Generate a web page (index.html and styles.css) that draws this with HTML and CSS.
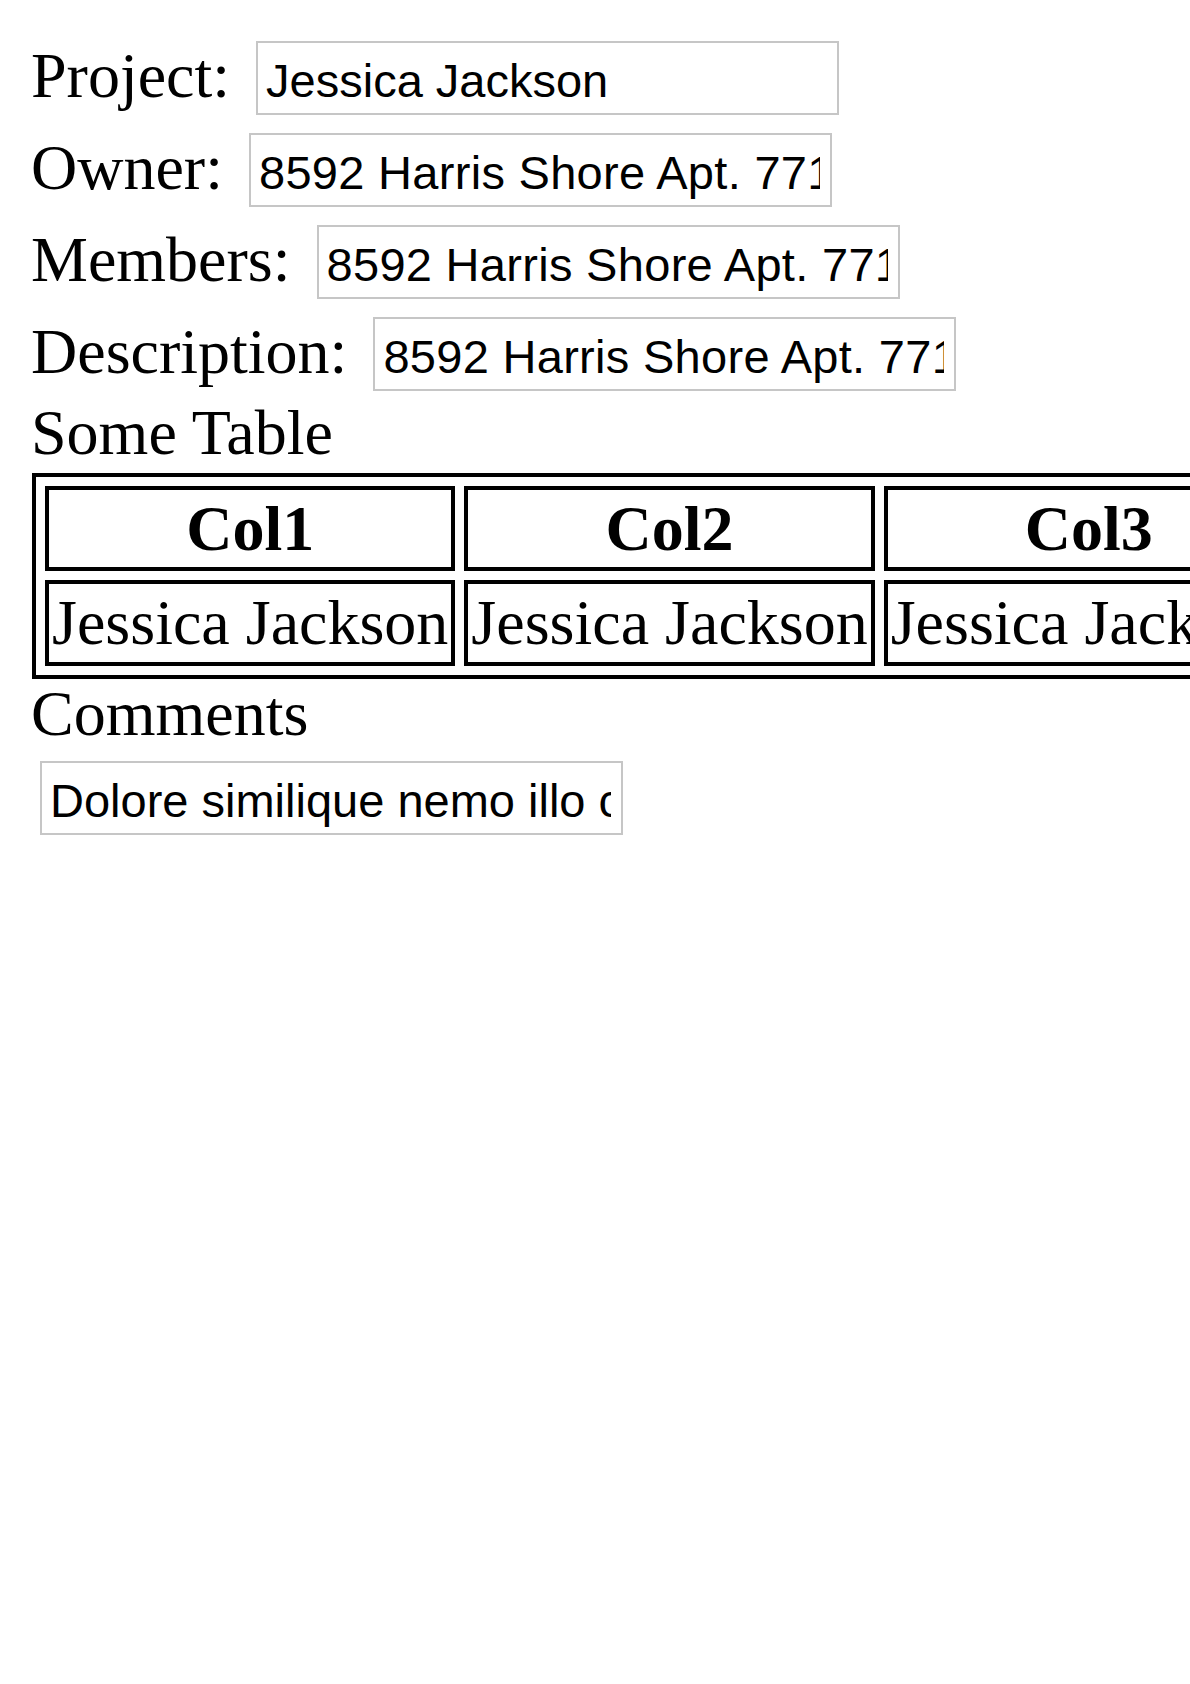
FILE: index.html
```html
<!DOCTYPE html>
<html lang="en">
<head>
<meta charset="utf-8">
<title>Project</title>
<link rel="stylesheet" href="styles.css">
</head>
<body>
<main class="page">
  <div class="fields">
    <div class="field">
      <label class="field-label" for="project">Project:</label>
      <input class="text-input" id="project" type="text" value="Jessica Jackson">
    </div>
    <div class="field">
      <label class="field-label" for="owner">Owner:</label>
      <input class="text-input address-input" id="owner" type="text" value="8592 Harris Shore Apt. 771 Port Kimberly, NV 39211">
    </div>
    <div class="field">
      <label class="field-label" for="members">Members:</label>
      <input class="text-input address-input" id="members" type="text" value="8592 Harris Shore Apt. 771 Port Kimberly, NV 39211">
    </div>
    <div class="field">
      <label class="field-label" for="description">Description:</label>
      <input class="text-input address-input" id="description" type="text" value="8592 Harris Shore Apt. 771 Port Kimberly, NV 39211">
    </div>
  </div>

  <div class="section-title table-title">Some Table</div>
  <table class="data-table">
    <thead>
      <tr>
        <th>Col1</th>
        <th>Col2</th>
        <th>Col3</th>
      </tr>
    </thead>
    <tbody>
      <tr>
        <td>Jessica Jackson</td>
        <td>Jessica Jackson</td>
        <td>Jessica Jackson</td>
      </tr>
    </tbody>
  </table>

  <div class="section-title comments-title">Comments</div>
  <input class="text-input comments-input" type="text" value="Dolore similique nemo illo consequatur voluptas.">
</main>
</body>
</html>
```

FILE: styles.css
```css
html, body {
  margin: 0;
  padding: 0;
  background: #ffffff;
}

body {
  overflow-x: hidden;
  color: #000000;
  font-family: "Liberation Serif", "Times New Roman", serif;
}

.page {
  padding: 41px 0 0 31px;
}

.fields {
  display: flex;
  flex-direction: column;
  gap: 18px;
}

.field {
  display: flex;
  align-items: baseline;
  gap: 26px;
}

.field-label {
  font-size: 64px;
  line-height: 64px;
  white-space: nowrap;
}

.text-input {
  box-sizing: border-box;
  width: 583px;
  height: 74px;
  margin: 0;
  padding: 5px 10px 0 8px;
  border: 2px solid #c6c6c6;
  border-radius: 0;
  background: #ffffff;
  color: #000000;
  font-family: "Liberation Sans", Arial, sans-serif;
  font-size: 47px;
  outline: none;
}

.address-input {
  letter-spacing: 0.3px;
}

.section-title {
  font-size: 64px;
  line-height: 70px;
  white-space: nowrap;
}

.table-title {
  margin-top: 7px;
}

.data-table {
  margin: 5px 0 0 1px;
  border: 4px solid #000000;
  border-spacing: 9px;
  font-size: 64px;
  white-space: nowrap;
}

.data-table th,
.data-table td {
  border: 4px solid #000000;
  padding: 2px 3px;
}

.data-table th {
  font-weight: bold;
  text-align: center;
  line-height: 73px;
}

.data-table td {
  text-align: left;
  line-height: 74px;
}

.comments-input {
  display: block;
  margin: 12px 0 0 9px;
}
```
